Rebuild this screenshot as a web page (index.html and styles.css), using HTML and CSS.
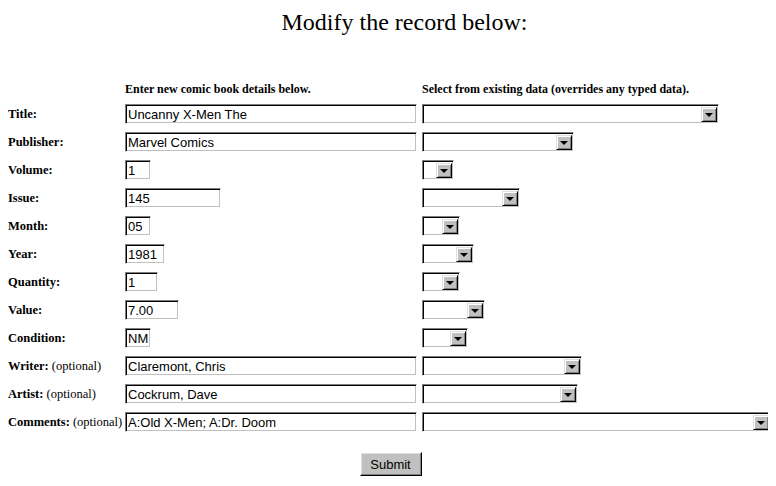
FILE: index.html
```html
<!DOCTYPE html>
<html>
<head>
<meta charset="utf-8">
<title>Modify record</title>
<link rel="stylesheet" href="styles.css">
</head>
<body>
<h1 class="page-title">Modify the record below:</h1>
<form class="record-form">
  <div class="grid">
    <div class="hd-blank"></div>
    <div class="hd">Enter new comic book details below.</div>
    <div class="hd">Select from existing data (overrides any typed data).</div>

    <label class="lbl"><b>Title:</b></label>
    <div class="cell"><input class="txt w291" value="Uncanny X-Men The"></div>
    <div class="cell"><span class="sel s296"><select></select><span class="arr"><span class="tri"></span></span></span></div>

    <label class="lbl"><b>Publisher:</b></label>
    <div class="cell"><input class="txt w291" value="Marvel Comics"></div>
    <div class="cell"><span class="sel s151"><select></select><span class="arr"><span class="tri"></span></span></span></div>

    <label class="lbl"><b>Volume:</b></label>
    <div class="cell"><input class="txt w25" value="1"></div>
    <div class="cell"><span class="sel s31"><select></select><span class="arr"><span class="tri"></span></span></span></div>

    <label class="lbl"><b>Issue:</b></label>
    <div class="cell"><input class="txt w95" value="145"></div>
    <div class="cell"><span class="sel s97"><select></select><span class="arr"><span class="tri"></span></span></span></div>

    <label class="lbl"><b>Month:</b></label>
    <div class="cell"><input class="txt w25" value="05"></div>
    <div class="cell"><span class="sel s37"><select></select><span class="arr"><span class="tri"></span></span></span></div>

    <label class="lbl"><b>Year:</b></label>
    <div class="cell"><input class="txt w39" value="1981"></div>
    <div class="cell"><span class="sel s51"><select></select><span class="arr"><span class="tri"></span></span></span></div>

    <label class="lbl"><b>Quantity:</b></label>
    <div class="cell"><input class="txt w32" value="1"></div>
    <div class="cell"><span class="sel s37"><select></select><span class="arr"><span class="tri"></span></span></span></div>

    <label class="lbl"><b>Value:</b></label>
    <div class="cell"><input class="txt w53" value="7.00"></div>
    <div class="cell"><span class="sel s62"><select></select><span class="arr"><span class="tri"></span></span></span></div>

    <label class="lbl"><b>Condition:</b></label>
    <div class="cell"><input class="txt w25" value="NM"></div>
    <div class="cell"><span class="sel s45"><select></select><span class="arr"><span class="tri"></span></span></span></div>

    <label class="lbl"><b>Writer:</b> (optional)</label>
    <div class="cell"><input class="txt w291" value="Claremont, Chris"></div>
    <div class="cell"><span class="sel s159"><select></select><span class="arr"><span class="tri"></span></span></span></div>

    <label class="lbl"><b>Artist:</b> (optional)</label>
    <div class="cell"><input class="txt w291" value="Cockrum, Dave"></div>
    <div class="cell"><span class="sel s155"><select></select><span class="arr"><span class="tri"></span></span></span></div>

    <label class="lbl"><b>Comments:</b> (optional)</label>
    <div class="cell"><input class="txt w291" value="A:Old X-Men; A:Dr. Doom"></div>
    <div class="cell"><span class="sel s348"><select></select><span class="arr"><span class="tri"></span></span></span></div>
  </div>
  <div class="actions"><button type="button" class="btn">Submit</button></div>
</form>
</body>
</html>
```
FILE: styles.css
```css
html, body {
  background: #fff;
  color: #000;
}
html {
  overflow: hidden;
}
body {
  margin: 8px;
  font-family: "Liberation Serif", "Times New Roman", serif;
}
.page-title {
  margin: 0;
  padding-left: 33px;
  text-align: center;
  font-size: 24px;
  font-weight: normal;
  line-height: 28px;
}
.record-form {
  margin-top: 36px;
}
.grid {
  display: grid;
  grid-template-columns: 117px 297px 349px;
  grid-auto-rows: 28px;
  align-items: center;
}
.hd {
  align-self: end;
  padding-bottom: 4px;
  font-size: 12px;
  font-weight: bold;
  line-height: 14px;
  white-space: nowrap;
}
.lbl {
  font-size: 12.5px;
  line-height: 14px;
  white-space: nowrap;
}
.cell {
  display: flex;
  align-items: center;
}
.txt {
  box-sizing: border-box;
  flex: none;
  height: 20px;
  margin: 0;
  padding: 1px 2px 0;
  font-family: "Liberation Sans", Arial, sans-serif;
  font-size: 13px;
  color: #000;
  background: #fff;
  border: 1px solid;
  border-color: #808080 #fff #fff #808080;
  box-shadow: inset 1px 1px #000, inset -1px -1px #c0c0c0;
  outline: none;
}
.w25 { width: 26px; }
.w32 { width: 33px; }
.w39 { width: 40px; }
.w53 { width: 54px; }
.w95 { width: 96px; }
.w291 { width: 292px; }

.sel {
  box-sizing: border-box;
  flex: none;
  display: inline-flex;
  align-items: stretch;
  height: 20px;
  padding: 2px 1px 1px 2px;
  background: #fff;
  border: 1px solid;
  border-color: #808080 #fff #fff #808080;
  box-shadow: inset 1px 1px #000, inset -1px -1px #c0c0c0;
}
.sel select {
  flex: 1;
  min-width: 0;
  margin: 0;
  padding: 0;
  border: 0;
  background: transparent;
  appearance: none;
  -webkit-appearance: none;
  outline: none;
}
.arr {
  box-sizing: border-box;
  flex: none;
  width: 16px;
  display: flex;
  align-items: center;
  justify-content: center;
  background: #c0c0c0;
  border: 1px solid;
  border-color: #dfdfdf #000 #000 #dfdfdf;
  box-shadow: inset 1px 1px #fff, inset -1px -1px #808080;
}
.tri {
  width: 0;
  height: 0;
  border-left: 4px solid transparent;
  border-right: 4px solid transparent;
  border-top: 4px solid #000;
  margin-top: 1px;
}
.s31 { width: 32px; }
.s37 { width: 38px; }
.s45 { width: 46px; }
.s51 { width: 52px; }
.s62 { width: 63px; }
.s97 { width: 98px; }
.s151 { width: 152px; }
.s155 { width: 156px; }
.s159 { width: 160px; }
.s296 { width: 297px; }
.s348 { width: 349px; }

.actions {
  width: 760px;
  margin-top: 16px;
  text-align: center;
  padding-left: 5px;
  box-sizing: border-box;
}
.btn {
  box-sizing: border-box;
  width: 62px;
  height: 24px;
  margin: 0;
  padding: 0;
  font-family: "Liberation Sans", Arial, sans-serif;
  font-size: 13px;
  color: #000;
  background: #c0c0c0;
  border: 1px solid;
  border-color: #fff #000 #000 #fff;
  box-shadow: inset -1px -1px #808080, inset 1px 1px #dfdfdf;
}
```
